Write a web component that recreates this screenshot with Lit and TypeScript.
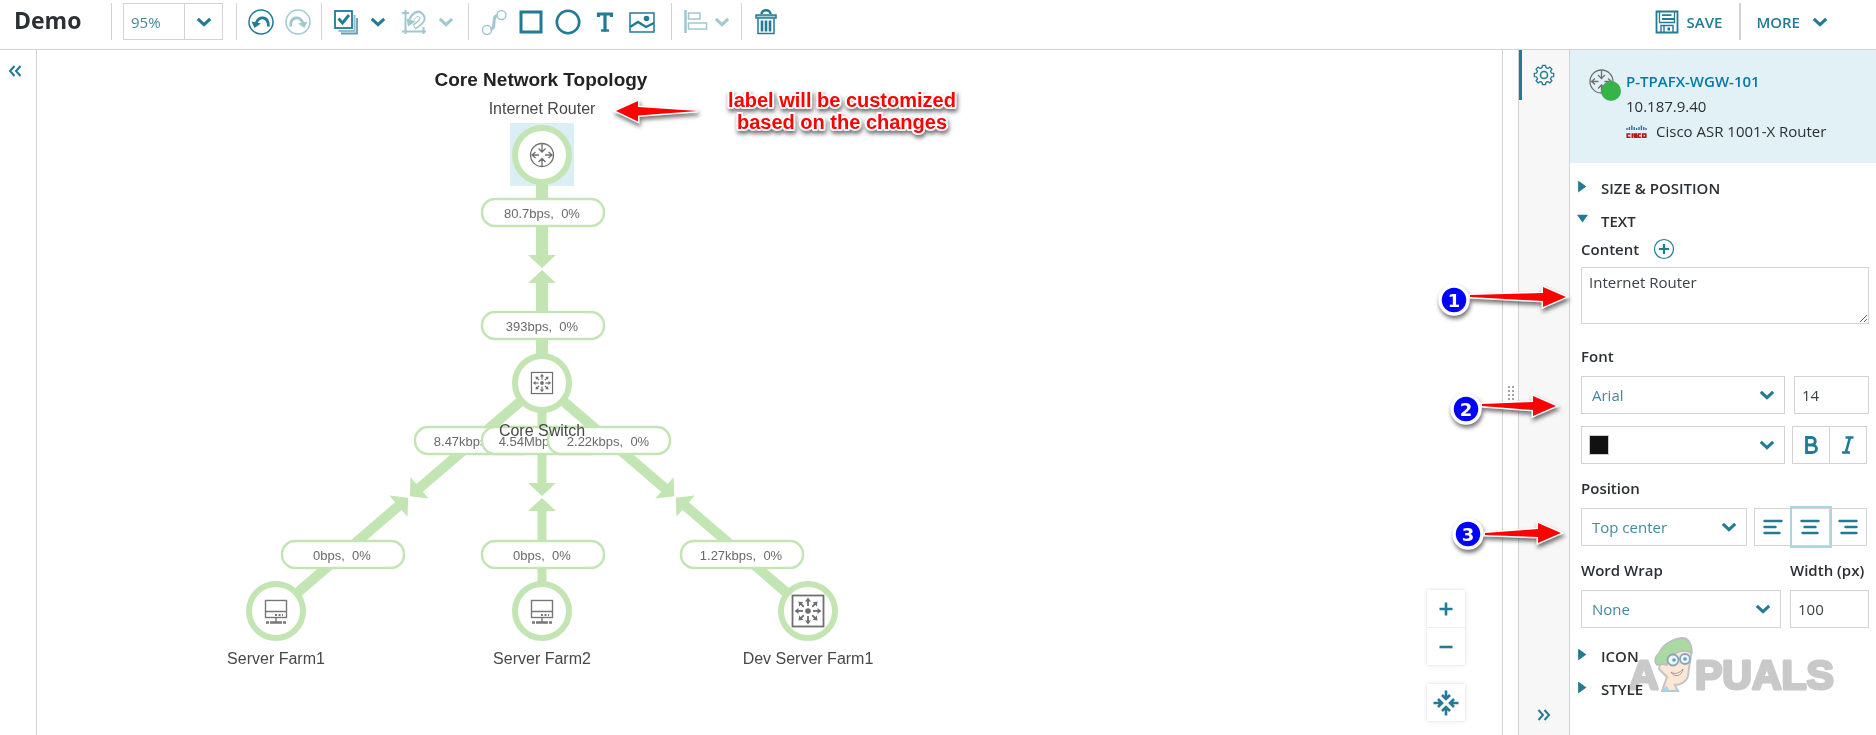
import { LitElement, html, svg, css, nothing } from "lit";
import { customElement, property, state } from "lit/decorators.js";
import { classMap } from "lit/directives/class-map.js";

const base = css`
  * {
    box-sizing: border-box;
  }
  :host {
    --teal: #217b94;
    --line: #d3d3d3;
    --ink: #2b3034;
    color: var(--ink);
    font-family: "Open Sans", "Noto Sans", sans-serif;
    font-size: 15px;
    line-height: 20px;
  }
  button {
    display: flex;
    align-items: center;
    justify-content: center;
    margin: 0;
    padding: 0;
    border: 0;
    background: none;
    color: var(--teal);
    font: inherit;
    cursor: pointer;
  }
  svg {
    display: block;
    flex: none;
  }
`;

const chevron = html`<svg width="16" height="10" viewBox="0 0 16 10" fill="none" stroke="currentColor" stroke-width="3">
  <path d="M1.8 1.8 8 7.6l6.2-5.8" />
</svg>`;

const stroked = (body: unknown, w = 26, h = 26) =>
  html`<svg width=${w} height=${h} viewBox="0 0 ${w} ${h}" fill="none" stroke="currentColor" stroke-width="1.5">${body}</svg>`;

const icons: Record<string, unknown> = {
  undo: stroked(svg`<circle cx="13" cy="13" r="12"/><path d="M20.500 17.500C20.500 7 11.500 6.500 8 14" stroke-width="2.800"/><path d="M3.500 12.500 13 14.500 6.500 19z" fill="currentColor" stroke="none"/>`),
  redo: stroked(svg`<circle cx="13" cy="13" r="12"/><path d="M5.500 17.500C5.500 7 14.500 6.500 18 14" stroke-width="2.800"/><path d="M22.500 12.500 13 14.500 19.500 19z" fill="currentColor" stroke="none"/>`),
  select: stroked(svg`<path d="M24 9v15.500H8" stroke="#5e9fb3" stroke-width="1.800"/><path d="M21.500 6v16H5.500" stroke="#8fc0cf" stroke-width="2"/><rect x="2" y="2" width="17" height="17" fill="#fff" stroke-width="1.800"/><path d="m5.500 9.500 4 4.500 6.500-8" stroke-width="2.800"/>`),
  crop: stroked(svg`<path d="M4.500 1v24M1 4h7M1 22.500h24M22.500 25v-7" stroke-width="2"/><path d="M13 18c9-5.500 10-9 7-12s-7-1-10 5.500" stroke-width="6"/><path d="M13.800 17.500c8.200-5.500 8.700-8.500 5.700-11s-6-.5-9 5.500" stroke="#fff" stroke-width="3"/><path d="m5.500 9.500 9 3-7.500 5z" fill="currentColor" stroke="none"/>`),
  link: stroked(svg`<circle cx="6" cy="21" r="4.500"/><circle cx="20.500" cy="6" r="4.500"/><path d="M9.500 20c4-.5 3-3 3.500-7s0-6 3.500-6.500" stroke-width="3"/>`),
  square: stroked(svg`<rect x="3" y="3" width="20" height="20" stroke-width="3"/>`),
  circle: stroked(svg`<circle cx="13" cy="13" r="11.200" stroke-width="2.600"/>`),
  type: stroked(svg`<path d="M6.500 8V5h13v3M13 5v17.500" stroke-width="3.200"/><path d="M9 21.500h8" stroke-width="2.400"/>`),
  image: stroked(svg`<rect x="1" y="4" width="24" height="19"/><circle cx="17.500" cy="9.500" r="2.800" fill="currentColor" stroke="none"/><path d="m1 18 8-5 8 5 8-4" stroke-width="2.400"/>`),
  align: stroked(svg`<path d="M2.500 1v23" stroke-width="2.600"/><rect x="5.500" y="4" width="11.500" height="6"/><rect x="5.500" y="14" width="18" height="6"/>`),
  trash: stroked(svg`<path d="M8.500 5c0-5 9-5 9 0" stroke-width="2.400"/><rect x="3" y="6" width="20" height="3" fill="#9ed3e4"/><path d="M5 9.500v15h16v-15"/><path d="M9 11.500v11M13 11.500v11M17 11.500v11" stroke-width="2.600"/>`),
  save: stroked(svg`<path d="M1.500 1.500h21v21h-21z" stroke-width="1.800"/><path d="M4.500 2v10.500h15V2" stroke-width="1.300"/><path d="M7 5.200h9.500M7 9h12" stroke-width="1.800"/><path d="M6 22v-6.500h12V22M9 16v6" stroke-width="1.400"/><rect x="12.500" y="17.500" width="2.500" height="3" fill="currentColor" stroke="none"/>`, 24, 24),
};

/* ---------- top bar ---------- */

@customElement("map-toolbar")
class MapToolbar extends LitElement {
  static styles = [
    base,
    css`
      :host {
        display: flex;
        align-items: flex-start;
        height: 50px;
        padding: 3px 0 0 14px;
        border-bottom: 1px solid var(--line);
        background: #fff;
      }
      h1 {
        width: 97px;
        margin: 0;
        font-size: 23px;
        font-weight: 700;
        line-height: 34px;
      }
      .group {
        display: flex;
        align-items: center;
        height: 37px;
        border-left: 1px solid var(--line);
        padding: 0 5px;
      }
      .zoom {
        padding: 0 13px 0 11px;
      }
      .zoom input {
        width: 62px;
        height: 37px;
        padding: 0 7px;
        border: 1px solid var(--line);
        background: #fff;
        color: #4489a0;
        font: inherit;
      }
      .zoom button {
        width: 38px;
        height: 37px;
        border: 1px solid var(--line);
        border-left: 0;
      }
      .tool {
        width: 37px;
        height: 37px;
      }
      .more {
        width: 28px;
        height: 37px;
      }
      .more.tight {
        width: 16px;
      }
      .selection {
        padding-right: 8px;
      }
      .shapes {
        padding: 0 11px 0 6px;
      }
      .arrange {
        padding-right: 11px;
      }
      .off {
        opacity: 0.42;
      }
      .gap {
        margin-left: 3px;
      }
      .right {
        display: flex;
        margin-left: auto;
        padding-right: 48px;
      }
      .right button {
        height: 37px;
        gap: 8px;
        font-weight: 600;
      }
      .save {
        padding-right: 17px;
      }
      .right .menu {
        gap: 12px;
        padding-left: 15px;
        border-left: 2px solid var(--line);
      }
    `,
  ];

  private tool(name: string, label: string, off = false, gap = false) {
    return html`<button class=${classMap({ tool: true, off, gap })} ?disabled=${off} aria-label=${label}>${icons[name]}</button>`;
  }

  render() {
    return html`
      <h1>Demo</h1>
      <div class="group zoom">
        <input aria-label="Zoom" .value=${"95%"} />
        <button aria-label="Zoom levels">${chevron}</button>
      </div>
      <div class="group">${this.tool("undo", "Undo")}${this.tool("redo", "Redo", true)}</div>
      <div class="group selection">
        ${this.tool("select", "Select")}
        <button class="more" aria-label="Select options">${chevron}</button>
        ${this.tool("crop", "Rotate", true, true)}
        <button class="more off" disabled aria-label="Rotate options">${chevron}</button>
      </div>
      <div class="group shapes">
        ${this.tool("link", "Connect", true)}${this.tool("square", "Rectangle")}${this.tool("circle", "Ellipse")}
        ${this.tool("type", "Text")}${this.tool("image", "Image")}
      </div>
      <div class="group arrange">
        ${this.tool("align", "Align", true)}
        <button class="more tight off" disabled aria-label="Align options">${chevron}</button>
      </div>
      <div class="group">${this.tool("trash", "Delete")}</div>
      <div class="right">
        <button class="save">${icons.save}<span>SAVE</span></button>
        <button class="menu"><span>MORE</span>${chevron}</button>
      </div>
    `;
  }
}

/* ---------- topology canvas ---------- */

type Point = { x: number; y: number };
type DeviceKind = "router" | "switch" | "server" | "bigSwitch";

const GREEN = "#c3e5b3";

const routerGlyph = svg`<g fill="none" stroke="#6f6f6f" stroke-width="1.300">
  <circle r="11.500"/>
  <path d="M0-11v7M-3.500-6.500 0-3l3.500-3.500M0 11V4M-3.500 7 0 3.500 3.500 7M-3 0h-6M-6.500-3-10 0l3.500 3M3 0h6M6.500-3 10 0 6.500 3"/>
</g>`;

const switchGlyph = svg`<g fill="none" stroke="#6f6f6f" stroke-width="1.800">
  <rect x="-15.500" y="-15.500" width="31" height="31" stroke-width="1.800"/>
  <circle r="2.800" fill="#6f6f6f" stroke="none"/>
  ${[0, 90, 180, 270].map((a) => svg`<path transform="rotate(${a})" d="M5 0h6"/><path transform="rotate(${a})" d="M9.500-3l4 3-4 3z" fill="#6f6f6f" stroke="none"/>`)}
  ${[45, 135, 225, 315].map((a) => svg`<path transform="rotate(${a})" d="M6 0h5"/><path transform="rotate(${a})" d="M9.500-3l4 3-4 3z" fill="#6f6f6f" stroke="none"/>`)}
</g>`;

const serverGlyph = svg`<g fill="none" stroke="#777" stroke-width="1.400">
  <rect x="-10.500" y="-10.500" width="21" height="17"/>
  <path d="M-10.500 0.500h21M0 7v5"/>
  <path d="M-1 4h8" stroke-dasharray="2 1.500" stroke-width="2"/>
  <path d="M-10 11.500h3M-6 11.500h12M7 11.500h3" stroke-width="2.400"/>
</g>`;

const glyphs: Record<DeviceKind, unknown> = {
  router: routerGlyph,
  switch: svg`<g transform="scale(.68)">${switchGlyph}</g>`,
  server: serverGlyph,
  bigSwitch: switchGlyph,
};

const devices: { at: Point; kind: DeviceKind; label: string; labelY: number }[] = [
  { at: { x: 542, y: 155 }, kind: "router", label: "Internet Router", labelY: 114 },
  { at: { x: 542, y: 383 }, kind: "switch", label: "Core Switch", labelY: 436 },
  { at: { x: 276, y: 611 }, kind: "server", label: "Server Farm1", labelY: 664 },
  { at: { x: 542, y: 611 }, kind: "server", label: "Server Farm2", labelY: 664 },
  { at: { x: 808, y: 611 }, kind: "bigSwitch", label: "Dev Server Farm1", labelY: 664 },
];

const links: { from: number; to: number; weight: number }[] = [
  { from: 0, to: 1, weight: 12 },
  { from: 1, to: 2, weight: 10 },
  { from: 1, to: 3, weight: 9 },
  { from: 1, to: 4, weight: 10 },
];

const loads: { at: Point; text: string }[] = [
  { at: { x: 543, y: 212 }, text: "80.7bps,  0%" },
  { at: { x: 543, y: 325 }, text: "393bps,  0%" },
  { at: { x: 476, y: 440 }, text: "8.47kbps,  0%" },
  { at: { x: 543, y: 440 }, text: "4.54Mbps,  0%" },
  { at: { x: 609, y: 440 }, text: "2.22kbps,  0%" },
  { at: { x: 343, y: 554 }, text: "0bps,  0%" },
  { at: { x: 543, y: 554 }, text: "0bps,  0%" },
  { at: { x: 742, y: 554 }, text: "1.27kbps,  0%" },
];

@customElement("topology-canvas")
class TopologyCanvas extends LitElement {
  static styles = [
    base,
    css`
      :host {
        position: relative;
        display: block;
        flex: 1;
        min-width: 0;
        overflow: hidden;
        background: #fff;
      }
      .map {
        width: 100%;
        height: 100%;
        font-family: "Liberation Sans", Arial, sans-serif;
        text-anchor: middle;
      }
      .title {
        font-size: 19px;
        font-weight: 700;
        fill: #222;
      }
      .name {
        font-size: 16px;
        fill: #484848;
      }
      .load {
        font-size: 13px;
        fill: #6a6a6a;
        white-space: pre;
      }
      .controls {
        position: absolute;
        right: 37px;
        bottom: 14px;
        display: grid;
        gap: 19px;
      }
      .stack {
        display: grid;
        gap: 1px;
        background: #eee;
        box-shadow: 0 0 4px rgba(0, 0, 0, 0.16);
      }
      .stack button {
        width: 38px;
        height: 37px;
        background: #fff;
      }
    `,
  ];

  private half(a: Point, b: Point, weight: number) {
    const length = Math.hypot(b.x - a.x, b.y - a.y) / 2 - 1;
    const angle = (Math.atan2(b.y - a.y, b.x - a.x) * 180) / Math.PI;
    const h = weight / 2;
    return svg`<path fill=${GREEN} transform="translate(${a.x} ${a.y}) rotate(${angle})"
      d="M26 ${-h}H${length - 13}V-14L${length} 0L${length - 13} 14V${h}H26z"/>`;
  }

  render() {
    return html`
      <svg class="map" role="img" aria-label="Core Network Topology">
        <g transform="translate(-37 -50)">
          <rect x="510" y="123" width="64" height="63" fill="#dceef5" />
          ${links.map(({ from, to, weight }) => {
            const a = devices[from].at;
            const b = devices[to].at;
            return svg`${this.half(a, b, weight)}${this.half(b, a, weight)}`;
          })}
          ${devices.map(
            (d) => svg`<g transform="translate(${d.at.x} ${d.at.y})">
              <circle r="27" fill="#fff" stroke=${GREEN} stroke-width="6"/>${glyphs[d.kind]}
            </g>`,
          )}
          ${loads.map(
            (l) => svg`<rect x=${l.at.x - 61} y=${l.at.y - 13} width="122" height="27" rx="13" fill="#fff" stroke=${GREEN} stroke-width="2.500"/>
              <text class="load" x=${l.at.x - 1} y=${l.at.y + 6}>${l.text}</text>`,
          )}
          <text class="title" x="541" y="86">Core Network Topology</text>
          ${devices.map((d) => svg`<text class="name" x=${d.at.x} y=${d.labelY}>${d.label}</text>`)}
        </g>
      </svg>
      <div class="controls">
        <div class="stack">
          <button aria-label="Zoom in">
            <svg width="14" height="14" viewBox="0 0 14 14" stroke="currentColor" stroke-width="2.600"><path d="M7 .5v13M.5 7h13" /></svg>
          </button>
          <button aria-label="Zoom out">
            <svg width="14" height="14" viewBox="0 0 14 14" stroke="currentColor" stroke-width="2.600"><path d="M.5 7h13" /></svg>
          </button>
        </div>
        <div class="stack">
          <button aria-label="Fit to window">
            <svg width="26" height="26" viewBox="-13 -13 26 26" fill="none" stroke="currentColor" stroke-width="2.600">
              ${[0, 90, 180, 270].map((a) => svg`<path transform="rotate(${a})" d="M-12.500 0h8M-8-4l4 4-4 4"/>`)}
            </svg>
          </button>
        </div>
      </div>
    `;
  }
}

/* ---------- property panel ---------- */

@customElement("property-panel")
class PropertyPanel extends LitElement {
  static styles = [
    base,
    css`
      :host {
        display: block;
        width: 307px;
        flex: none;
        border-left: 1px solid var(--line);
        background: #fff;
      }
      header {
        display: grid;
        grid-template-columns: 37px 1fr;
        height: 113px;
        padding: 19px 0 0 19px;
        background: #e2f1f5;
      }
      .device {
        line-height: 25px;
      }
      .device a {
        color: #0779a8;
        font-weight: 600;
        text-decoration: none;
      }
      .model {
        display: flex;
        align-items: center;
        gap: 9px;
      }
      .sections {
        position: relative;
        padding: 9px 7px 0 11px;
      }
      h2 {
        margin: 0;
        font-size: 15px;
        font-weight: 600;
        line-height: 33px;
      }
      .toggle {
        width: 100%;
        justify-content: flex-start;
        color: var(--ink);
      }
      .mark {
        width: 11px;
        height: 12px;
        margin: 0 13px 4px -4px;
        background: var(--teal);
        clip-path: polygon(10% 0, 85% 50%, 10% 100%);
      }
      .mark.open {
        clip-path: polygon(0 10%, 100% 10%, 50% 75%);
      }
      label {
        display: block;
        font-weight: 600;
      }
      .content-head {
        display: flex;
        align-items: center;
        gap: 14px;
        height: 22px;
        margin-bottom: 7px;
      }
      textarea,
      input,
      select {
        display: block;
        width: 100%;
        margin: 0;
        border: 1px solid var(--line);
        border-radius: 0;
        background: #fff;
        color: #3c4146;
        font: inherit;
      }
      textarea {
        height: 57px;
        padding: 4px 7px;
        resize: vertical;
      }
      input {
        height: 38px;
        padding: 0 7px;
      }
      select {
        height: 38px;
        padding: 0 10px;
        appearance: none;
        color: #4489a0;
      }
      .select {
        position: relative;
        color: var(--teal);
      }
      .select svg {
        position: absolute;
        top: 14px;
        right: 10px;
        pointer-events: none;
      }
      .swatch {
        position: absolute;
        top: 9px;
        left: 8px;
        width: 20px;
        height: 20px;
        border: 1px solid #ccc;
        background: #111;
        pointer-events: none;
      }
      .field {
        display: grid;
        gap: 10px;
        margin-top: 14px;
      }
      .font {
        margin-top: 22px;
      }
      .row {
        display: grid;
        grid-template-columns: 1fr 75px;
        gap: 12px 9px;
      }
      .row.position {
        grid-template-columns: 1fr 113px;
      }
      .row.wrap {
        grid-template-columns: 1fr 79px;
        row-gap: 10px;
        margin: 14px 0 12px;
      }
      .row.wrap label {
        white-space: nowrap;
      }
      .buttons {
        display: flex;
        height: 38px;
        margin: 0 2px 0 -2px;
      }
      .buttons button {
        flex: 1;
        border: 1px solid var(--line);
      }
      .buttons button + button {
        border-left: 0;
      }
      .buttons button.active {
        outline: 2px solid #a9d6e3;
      }
      .brand {
        position: absolute;
        top: 473px;
        left: 58px;
        overflow: visible;
        mix-blend-mode: multiply;
        pointer-events: none;
      }
      .brand text {
        font: 700 41px "Liberation Sans", Arial, sans-serif;
        fill: #c9c9c9;
        stroke: #c9c9c9;
        stroke-width: 3;
        stroke-linejoin: round;
      }
    `,
  ];

  @state() private align = "center";
  @state() private textOpen = true;

  private section(title: string, open: boolean, toggle?: () => void) {
    return html`<h2>
      <button class="toggle" aria-expanded=${open} @click=${toggle ?? nothing}>
        <span class=${classMap({ mark: true, open })}></span>${title}
      </button>
    </h2>`;
  }

  private pick(id: string, value: string) {
    return html`<div class="select">
      <select id=${id}>
        <option>${value}</option>
      </select>
      ${chevron}
    </div>`;
  }

  private alignButton(name: string, d: string) {
    return html`<button
      class=${classMap({ active: this.align === name })}
      aria-label="Align ${name}"
      @click=${() => (this.align = name)}
    >
      <svg width="20" height="16" viewBox="0 0 20 16" stroke="currentColor" stroke-width="2.400" stroke-linecap="round"><path d=${d} /></svg>
    </button>`;
  }

  private textFields() {
    return html`
      <div class="content-head">
        <label for="content">Content</label>
        <button aria-label="Insert field">
          <svg width="22" height="22" viewBox="0 0 22 22" fill="none" stroke="currentColor">
            <circle cx="11" cy="11" r="9.500" stroke-width="1.200" />
            <path d="M11 6v10M6 11h10" stroke-width="2.200" />
          </svg>
        </button>
      </div>
      <textarea id="content" .value=${"Internet Router"}></textarea>

      <div class="field font">
        <label for="font">Font</label>
        <div class="row">
          ${this.pick("font", "Arial")}
          <input aria-label="Font size" .value=${"14"} />
          <div class="select">
            <select aria-label="Font color">
              <option value="#111111"></option>
            </select>
            <span class="swatch"></span>
            ${chevron}
          </div>
          <div class="buttons">
            <button aria-label="Bold">
              <svg width="16" height="20" viewBox="0 0 16 20" fill="none" stroke="currentColor" stroke-width="2.800">
                <path d="M3.500 2.500v15H9c6 0 6-7.500 0-7.500H3.500 8.500c5 0 5-7.500 0-7.500z" />
              </svg>
            </button>
            <button aria-label="Italic">
              <svg width="16" height="20" viewBox="0 0 16 20" fill="none" stroke="currentColor" stroke-width="2.600">
                <path d="M5.500 2.500h8M2 17.500h8M9.800 3 6 17" />
              </svg>
            </button>
          </div>
        </div>
      </div>

      <div class="field">
        <label for="position">Position</label>
        <div class="row position">
          ${this.pick("position", "Top center")}
          <div class="buttons">
            ${this.alignButton("left", "M1.500 2h17M1.500 8h11M1.500 14h15")}
            ${this.alignButton("center", "M1.500 2h17M4.500 8h11M2.500 14h15")}
            ${this.alignButton("right", "M1.500 2h17M7.500 8h11M3.500 14h15")}
          </div>
        </div>
      </div>

      <div class="row wrap">
        <label for="wrap">Word Wrap</label>
        <label for="width">Width (px)</label>
        ${this.pick("wrap", "None")}
        <input id="width" .value=${"100"} />
      </div>
    `;
  }

  render() {
    return html`
      <header>
        <svg width="34" height="34" viewBox="-12.500 -12.500 34 34">
          <g>${routerGlyph}</g>
          <circle cx="9.500" cy="9.500" r="10" fill="#37b34a" />
        </svg>
        <div class="device">
          <div><a href="#device">P-TPAFX-WGW-101</a></div>
          <div>10.187.9.40</div>
          <div class="model">
            <svg width="21" height="14" viewBox="0 0 21 14" role="img" aria-label="Cisco">
              <path d="M1 5V3M3.400 5V2M5.800 5V.5M8.200 5V2M10.600 5V3M13 5V2M15.400 5V.5M17.800 5V2M20 5V3" stroke="#1b6d94" stroke-width="1.300" />
              <g fill="none" stroke="#b3161d" stroke-width="1.600">
                <path d="M4.500 9H1.200v3.200h3.300M6.300 8.200V13M11 9H8.200v1.600h2.300v1.600H7.800M15.200 9h-2.900v3.200h2.900" />
                <rect x="16.800" y="9" width="3" height="3.200" />
              </g>
            </svg>
            <span>Cisco ASR 1001-X Router</span>
          </div>
        </div>
      </header>
      <div class="sections">
        ${this.section("SIZE & POSITION", false)}
        ${this.section("TEXT", this.textOpen, () => (this.textOpen = !this.textOpen))}
        ${this.textOpen ? this.textFields() : nothing}
        ${this.section("ICON", false)} ${this.section("STYLE", false)}
        <svg class="brand" width="212" height="58" viewBox="0 0 212 58">
          <text x="1" y="53">A</text>
          <path d="M33 22c-2-5 6-19 22-20 6 0 8 8 8 16l-3 22c-2 7-9 9-13 9l3 6H34l5-14-8-8z" fill="#fbe7d3" stroke="#c4c4c4" stroke-width="2" />
          <path d="M29 29c-4-4-1-10 2-12C35 7 50 0 58 3c5 3 6 8 6 14-8-4-14-1-20 2-4 2-4 4-5 10-5-2-7 0-10 0z" fill="#abd9a4" stroke="#bdbdbd" stroke-width="1.500" />
          <path d="M34 55c4-6 5-6 7-1l5 1 3-3 2 3z" fill="#a8d3e8" />
          <g fill="#eef6fa" stroke="#8aa5b4" stroke-width="1.800">
            <circle cx="45" cy="24" r="5.500" />
            <circle cx="57" cy="23" r="5" />
          </g>
          <circle cx="46" cy="24" r="1.800" fill="#5b9fc4" />
          <circle cx="57" cy="23" r="1.800" fill="#5b9fc4" />
          <path d="M43 36c4 3 9 1 12-3-1 7-9 9-12 3z" fill="#fff" stroke="#b08f80" />
          <text x="67" y="53">PUALS</text>
        </svg>
      </div>
    `;
  }
}

/* ---------- page ---------- */

function gearPath(teeth: number, outer: number, inner: number) {
  const points: string[] = [];
  const step = (Math.PI * 2) / teeth;
  for (let i = 0; i < teeth; i++) {
    [
      [-0.32, inner],
      [-0.2, outer],
      [0.2, outer],
      [0.32, inner],
    ].forEach(([offset, r]) => {
      const a = (i + offset) * step;
      points.push(`${(Math.cos(a) * r).toFixed(2)} ${(Math.sin(a) * r).toFixed(2)}`);
    });
  }
  return `M${points.join("L")}z`;
}

const callouts: { n: number; badge: Point; start: Point; tip: Point }[] = [
  { n: 1, badge: { x: 54, y: 250 }, start: { x: 70, y: 246 }, tip: { x: 166, y: 247 } },
  { n: 2, badge: { x: 66, y: 359 }, start: { x: 82, y: 355 }, tip: { x: 156, y: 356 } },
  { n: 3, badge: { x: 68, y: 484 }, start: { x: 85, y: 484 }, tip: { x: 161, y: 483 } },
];

@customElement("app-root")
class AppRoot extends LitElement {
  static styles = [
    base,
    css`
      :host {
        display: flex;
        flex-direction: column;
        min-height: 100vh;
        background: #fff;
      }
      .body {
        position: relative;
        display: flex;
        flex: 1;
      }
      .drawer {
        width: 37px;
        flex: none;
        padding: 15px 0 0 8px;
        border-right: 1px solid var(--line);
      }
      .splitter {
        display: grid;
        place-content: center;
        width: 17px;
        flex: none;
        border: solid var(--line);
        border-width: 0 1px;
      }
      .tabs {
        display: flex;
        flex-direction: column;
        justify-content: space-between;
        width: 50px;
        flex: none;
        background: #f7f7f7;
      }
      .tab {
        width: 50px;
        height: 50px;
        box-shadow: inset 3px 0 var(--teal);
      }
      .collapse {
        height: 40px;
      }
      .notes {
        position: absolute;
        top: 0;
        pointer-events: none;
        filter: drop-shadow(1px 3px 2px rgba(0, 0, 0, 0.55));
      }
      .notes.left {
        left: 605px;
      }
      .notes.right {
        right: 300px;
      }
      .arrow {
        fill: #fe0000;
        stroke: #fff;
        stroke-width: 3;
        paint-order: stroke;
      }
      .note {
        fill: #fe0000;
        stroke: #fff;
        stroke-width: 4;
        stroke-linejoin: round;
        paint-order: stroke;
        text-anchor: middle;
        font: 700 20px "Liberation Sans", Arial, sans-serif;
      }
      .digit {
        fill: #fff;
        text-anchor: middle;
        font: 700 18px "DejaVu Sans", sans-serif;
      }
    `,
  ];

  @property({ type: Boolean, reflect: true }) annotated = true;

  private notes() {
    return html`
      <svg class="notes left" width="370" height="100">
        <path class="arrow" d="M11 61 33 51v6l60 4-60 4.500v6z" />
        <text class="note" x="237" y="57">label will be customized</text>
        <text class="note" x="237" y="79">based on the changes</text>
      </svg>
      <svg class="notes right" width="176" height="540">
        ${callouts.map(({ n, badge, start, tip }) => {
          const neck = tip.x - 23;
          return svg`
            <path class="arrow" d="M${start.x} ${start.y - 1}L${neck} ${tip.y - 4}V${tip.y - 10}L${tip.x} ${tip.y}L${neck} ${tip.y + 10}V${tip.y + 4}L${start.x} ${start.y + 1}z"/>
            <circle cx=${badge.x} cy=${badge.y} r="14" fill="#0000fe" stroke="#fff" stroke-width="3.500"/>
            <text class="digit" x=${badge.x} y=${badge.y + 7}>${n}</text>`;
        })}
      </svg>
    `;
  }

  render() {
    return html`
      <map-toolbar></map-toolbar>
      <div class="body">
        <div class="drawer">
          <button aria-label="Expand left panel">
            <svg width="14" height="12" viewBox="0 0 14 12" fill="none" stroke="var(--teal)" stroke-width="2"><path d="M6.500 1 2 6l4.500 5M12.500 1 8 6l4.500 5" /></svg>
          </button>
        </div>
        <topology-canvas></topology-canvas>
        <div class="splitter">
          <svg width="6" height="14" viewBox="0 0 6 14" fill="#a5a5a5">
            ${[0, 4, 8, 12].map((y) => svg`<rect y=${y} width="2" height="2"/><rect x="4" y=${y} width="2" height="2"/>`)}
          </svg>
        </div>
        <div class="tabs">
          <button class="tab" aria-label="Settings">
            <svg width="22" height="22" viewBox="-11 -11 22 22" fill="none" stroke="currentColor" stroke-width="1.300" stroke-linejoin="round">
              <path d=${gearPath(8, 9.8, 7.6)} />
              <circle r="3.500" stroke-width="1.600" />
            </svg>
          </button>
          <button class="collapse" aria-label="Collapse right panel">
            <svg width="14" height="12" viewBox="0 0 14 12" fill="none" stroke="currentColor" stroke-width="2"><path d="M1.500 1 6 6l-4.500 5M7.500 1 12 6l-4.500 5" /></svg>
          </button>
        </div>
        <property-panel></property-panel>
        ${this.annotated ? this.notes() : nothing}
      </div>
    `;
  }
}
